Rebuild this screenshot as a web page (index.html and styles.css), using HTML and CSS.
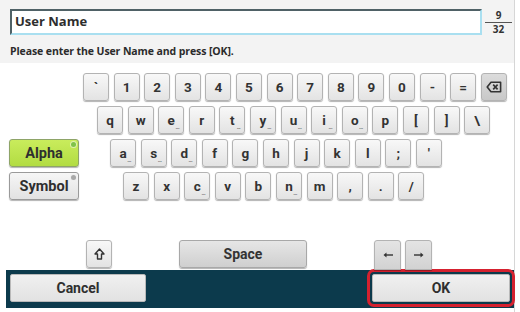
FILE: index.html
```html
<!DOCTYPE html>
<html lang="en">
<head>
    <meta charset="UTF-8">
    <title>User Name Keyboard</title>
    <link rel="stylesheet" href="styles.css">
</head>
<body>
    <div class="screen">

        <!-- Input header -->
        <div class="header">
            <div class="field-row">
                <div class="field">User Name</div>
                <div class="counter">
                    <span class="num">9</span>
                    <span class="den">32</span>
                </div>
            </div>
            <p class="hint">Please enter the User Name and press [OK].</p>
        </div>

        <!-- Keyboard -->
        <div class="keyboard">
            <div class="row r1">
                <div class="key">`</div>
                <div class="key">1</div>
                <div class="key">2</div>
                <div class="key">3</div>
                <div class="key">4</div>
                <div class="key">5</div>
                <div class="key">6</div>
                <div class="key">7</div>
                <div class="key">8</div>
                <div class="key">9</div>
                <div class="key">0</div>
                <div class="key">-</div>
                <div class="key">=</div>
                <div class="key backspace">
                    <svg width="16" height="12" viewBox="0 0 16 12">
                        <path d="M5 1.2 H14.6 V10.8 H5 L1.2 6 Z" fill="none" stroke="#333" stroke-width="1.6" stroke-linejoin="round"/>
                        <path d="M7.2 3.6 L11.6 8.4 M11.6 3.6 L7.2 8.4" stroke="#333" stroke-width="1.6"/>
                    </svg>
                </div>
            </div>
            <div class="row r2">
                <div class="key">q</div>
                <div class="key">w</div>
                <div class="key more">e<span class="dots">...</span></div>
                <div class="key">r</div>
                <div class="key more">t<span class="dots">...</span></div>
                <div class="key more">y<span class="dots">...</span></div>
                <div class="key more">u<span class="dots">...</span></div>
                <div class="key more">i<span class="dots">...</span></div>
                <div class="key more">o<span class="dots">...</span></div>
                <div class="key">p</div>
                <div class="key">[</div>
                <div class="key">]</div>
                <div class="key">\</div>
            </div>
            <div class="row r3">
                <div class="mode alpha">Alpha<span class="led"></span></div>
                <div class="keys">
                    <div class="key more">a<span class="dots">...</span></div>
                    <div class="key more">s<span class="dots">...</span></div>
                    <div class="key more">d<span class="dots">...</span></div>
                    <div class="key">f</div>
                    <div class="key">g</div>
                    <div class="key">h</div>
                    <div class="key">j</div>
                    <div class="key">k</div>
                    <div class="key">l</div>
                    <div class="key">;</div>
                    <div class="key">'</div>
                </div>
            </div>
            <div class="row r4">
                <div class="mode symbol">Symbol<span class="led"></span></div>
                <div class="keys">
                    <div class="key">z</div>
                    <div class="key">x</div>
                    <div class="key more">c<span class="dots">...</span></div>
                    <div class="key">v</div>
                    <div class="key">b</div>
                    <div class="key more">n<span class="dots">...</span></div>
                    <div class="key">m</div>
                    <div class="key">,</div>
                    <div class="key">.</div>
                    <div class="key">/</div>
                </div>
            </div>
            <div class="row r5">
                <div class="key shift">
                    <svg width="11" height="12" viewBox="0 0 11 12">
                        <path d="M5.5 1 L10 6 H7.5 V11 H3.5 V6 H1 Z" fill="none" stroke="#333" stroke-width="1.4" stroke-linejoin="round"/>
                    </svg>
                </div>
                <div class="key space">Space</div>
                <div class="arrows">
                    <div class="key arrow">
                        <svg width="10" height="6" viewBox="0 0 10 6">
                            <path d="M10 3 H2" stroke="#333" stroke-width="1.4"/>
                            <path d="M0.5 3 L3.5 0.5 V5.5 Z" fill="#333"/>
                        </svg>
                    </div>
                    <div class="key arrow">
                        <svg width="10" height="6" viewBox="0 0 10 6">
                            <path d="M0 3 H8" stroke="#333" stroke-width="1.4"/>
                            <path d="M9.5 3 L6.5 0.5 V5.5 Z" fill="#333"/>
                        </svg>
                    </div>
                </div>
            </div>
        </div>

        <!-- Bottom bar -->
        <div class="bar">
            <div class="bar-btn cancel">Cancel</div>
            <div class="bar-btn ok">OK</div>
        </div>
    </div>
</body>
</html>
```

FILE: styles.css
```css
body {
    margin: 0;
    background-color: #fff;
    font-family: Roboto, "Liberation Sans", Arial, sans-serif;
    color: #333;
}
.screen {
    width: 514px;
    height: 312px;
    border-right: 1px solid #d6d6d6;
    background-color: #fff;
    display: flex;
    flex-direction: column;
}

/* Header */
.header {
    height: 63px;
    box-sizing: border-box;
    padding: 9px 0 0 10px;
    background-color: #f3f3f3;
}
.field-row {
    display: flex;
    align-items: flex-start;
}
.field {
    width: 472px;
    height: 26px;
    box-sizing: border-box;
    background-color: #fff;
    border-top: 2px solid #4f6166;
    border-left: 2px solid #4f6166;
    border-right: 2px solid #a9dff0;
    border-bottom: 2px solid #a9dff0;
    padding-left: 3px;
    font-family: "Open Sans", sans-serif;
    font-weight: bold;
    font-size: 13px;
    line-height: 21px;
    color: #2e2e2e;
}
.counter {
    margin-left: 3px;
    width: 27px;
    display: flex;
    flex-direction: column;
    align-items: center;
    font-family: "Open Sans", sans-serif;
    font-weight: bold;
    font-size: 10px;
    line-height: 12px;
}
.counter .den {
    width: 100%;
    text-align: center;
    border-top: 1px solid #555;
    margin-top: 1px;
}
.hint {
    margin: 10px 0 0;
    font-family: "Open Sans", sans-serif;
    font-weight: bold;
    font-size: 10.5px;
    line-height: 13px;
    letter-spacing: -0.1px;
    color: #2b2b2b;
}

/* Keyboard */
.keyboard {
    height: 207px;
    box-sizing: border-box;
    padding-top: 10px;
    display: flex;
    flex-direction: column;
    gap: 5px;
}
.row, .keys {
    display: flex;
    gap: 4.6px;
    height: 28px;
}
.r1 { padding-left: 83px; }
.r2 { padding-left: 97px; }
.r3, .r4 { padding-left: 9px; gap: 0; }
.r3 .keys { margin-left: 31px; }
.r4 .keys { margin-left: 44px; }
.key {
    position: relative;
    width: 26px;
    height: 28px;
    box-sizing: border-box;
    border: 1px solid #b3b3b3;
    border-radius: 3px;
    background: linear-gradient(#f8f8f8, #e3e3e3);
    box-shadow: 0 1px 1px rgba(0, 0, 0, 0.3);
    display: flex;
    justify-content: center;
    align-items: center;
    font-weight: bold;
    font-size: 13.5px;
    color: #333;
}
.key.backspace {
    background: linear-gradient(#dcdcdc, #c8c8c8);
}
.key .dots {
    position: absolute;
    right: 4px;
    bottom: 3px;
    font-size: 6px;
    line-height: 6px;
    letter-spacing: -0.5px;
    color: #666;
}
.mode {
    position: relative;
    width: 70px;
    height: 28px;
    box-sizing: border-box;
    border: 1px solid #9a9a9a;
    border-radius: 3px;
    box-shadow: 0 1px 1px rgba(0, 0, 0, 0.3);
    display: flex;
    justify-content: center;
    align-items: center;
    font-weight: bold;
    font-size: 14.5px;
    color: #2f2f2f;
}
.mode.alpha {
    background: linear-gradient(#c9ec5c, #b2dc42);
    border-color: #8ea468;
}
.mode.symbol {
    background: linear-gradient(#f6f6f6, #e2e2e2);
}
.mode .led {
    position: absolute;
    top: 2px;
    right: 2px;
    width: 5px;
    height: 5px;
    border-radius: 50%;
}
.alpha .led {
    background-color: #7fc24a;
    box-shadow: 0 0 0 1px #dff0b0;
}
.symbol .led {
    background-color: #a8a8a8;
    box-shadow: 0 0 0 1px #eee;
}
.r5 {
    margin-top: 35px;
    padding-left: 86px;
    gap: 0;
}
.key.space {
    width: 128px;
    margin-left: 67px;
    background: linear-gradient(#e6e6e6, #cfcfcf);
    border-color: #a8a8a8;
    font-size: 14px;
}
.arrows {
    display: flex;
    gap: 4px;
    margin-left: 67px;
}
.key.arrow {
    width: 27px;
    height: 30px;
    border-radius: 3px 3px 0 0;
    background: linear-gradient(#e4e4e4, #d2d2d2);
}

/* Bottom bar */
.bar {
    margin-left: 6px;
    height: 38px;
    box-sizing: border-box;
    padding: 4px;
    background-color: #0c3a4c;
    display: flex;
    justify-content: space-between;
}
.bar-btn {
    height: 28px;
    box-sizing: border-box;
    border: 1px solid #b9b9b9;
    border-radius: 2px;
    background: linear-gradient(#f0f0f0, #e2e2e2);
    display: flex;
    justify-content: center;
    align-items: center;
    font-weight: bold;
    font-size: 14px;
    color: #2f2f2f;
}
.cancel { width: 136px; }
.ok {
    width: 138px;
    outline: 3px solid #d5212f;
    outline-offset: 2px;
}
```
